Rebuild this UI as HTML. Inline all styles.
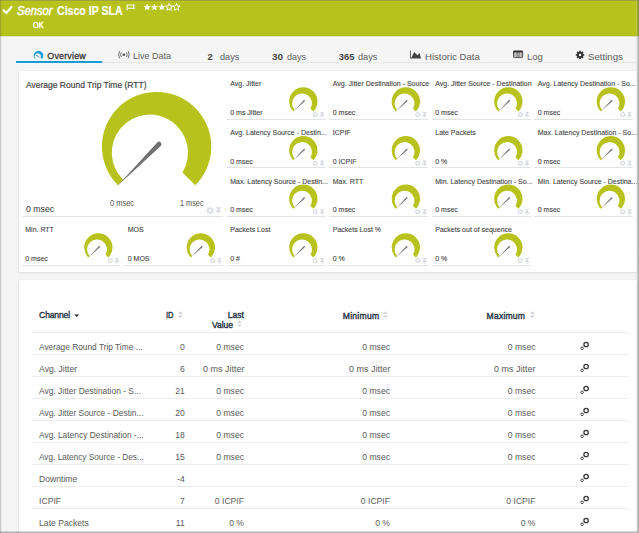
<!DOCTYPE html>
<html><head><meta charset="utf-8"><style>
html,body{margin:0;padding:0;}
body{width:639px;height:533px;overflow:hidden;position:relative;background:#f5f5f5;font-family:"Liberation Sans",sans-serif;}
.t{position:absolute;white-space:nowrap;line-height:normal;}
svg{overflow:visible;}
</style></head><body>
<div style="position:absolute;left:0px;top:0px;width:639px;height:35px;background:#b8c21d;"></div>
<div style="position:absolute;left:0px;top:35px;width:639px;height:1px;background:#b4be14;"></div>
<div style="position:absolute;left:0px;top:36px;width:639px;height:1px;background:#dfe2b6;"></div>
<div style="position:absolute;left:0px;top:37px;width:639px;height:1px;background:#f8f8f9;"></div>
<div style="position:absolute;left:0px;top:0px;width:639px;height:1px;background:#9ea23c;"></div>
<svg style="position:absolute;left:0px;top:0px;" width="20" height="20" viewBox="0 0 20 20"><path d="M3.0 9.7L6.4 13.0L12.2 6.2" fill="none" stroke="#fff" stroke-width="2.1"/></svg>
<div class="t" style="left:17.30px;top:4.26px;font-size:12.2px;color:#fff;font-style:italic;transform:scaleX(0.9216);transform-origin:0 0;-webkit-text-stroke:0.45px #fff;">Sensor</div>
<div class="t" style="left:57.40px;top:4.44px;font-size:12.0px;color:#fff;font-weight:bold;transform:scaleX(0.8809);transform-origin:0 0;-webkit-text-stroke:0.2px #fff;">Cisco IP SLA</div>
<div class="t" style="left:32.50px;top:19.72px;font-size:8.6px;color:#fff;transform:scaleX(0.8449);transform-origin:0 0;-webkit-text-stroke:0.4px #fff;">OK</div>
<svg style="position:absolute;left:0px;top:0px;" width="639" height="533" viewBox="0 0 639 533"><path d="M127.2 4.4V10.6" stroke="#fff" stroke-width="1.1"/><path d="M127.7 4.9H134.3L133.2 6.6L134.3 8.3H127.7" fill="none" stroke="#fff" stroke-width="1.05"/></svg>
<svg style="position:absolute;left:140px;top:0px;" width="44" height="14" viewBox="0 0 44 14"><polygon points="7.10,3.55 8.09,5.93 10.67,6.14 8.70,7.82 9.30,10.33 7.10,8.99 4.90,10.33 5.50,7.82 3.53,6.14 6.11,5.93" fill="#fff"/><polygon points="14.45,3.55 15.44,5.93 18.02,6.14 16.05,7.82 16.65,10.33 14.45,8.99 12.25,10.33 12.85,7.82 10.88,6.14 13.46,5.93" fill="#fff"/><polygon points="21.80,3.55 22.79,5.93 25.37,6.14 23.40,7.82 24.00,10.33 21.80,8.99 19.60,10.33 20.20,7.82 18.23,6.14 20.81,5.93" fill="#fff"/><polygon points="29.15,3.55 30.14,5.93 32.72,6.14 30.75,7.82 31.35,10.33 29.15,8.99 26.95,10.33 27.55,7.82 25.58,6.14 28.16,5.93" fill="none" stroke="#fff" stroke-width="1.0"/><polygon points="36.50,3.55 37.49,5.93 40.07,6.14 38.10,7.82 38.70,10.33 36.50,8.99 34.30,10.33 34.90,7.82 32.93,6.14 35.51,5.93" fill="none" stroke="#fff" stroke-width="1.0"/></svg>
<div style="position:absolute;left:0px;top:0px;width:1px;height:533px;background:rgba(70,70,70,.25);z-index:5;"></div>
<div style="position:absolute;left:1px;top:0px;width:1px;height:533px;background:rgba(70,70,70,.06);z-index:5;"></div>
<div style="position:absolute;left:636px;top:0px;width:3px;height:533px;background:linear-gradient(to right,rgba(255,255,255,.35),rgba(90,90,90,.2) 40%,rgba(80,80,80,.48));z-index:5;"></div>
<div style="position:absolute;left:16px;top:62px;width:621px;height:1px;background:#e8e8e8;"></div>
<div style="position:absolute;left:15px;top:60px;width:88px;height:1px;background:#fbfbfb;"></div>
<div style="position:absolute;left:15px;top:63px;width:88px;height:1px;background:#fbfbfb;"></div>
<div style="position:absolute;left:16px;top:61px;width:86px;height:2px;background:#1a9bd7;"></div>
<svg style="position:absolute;left:0px;top:0px;" width="639" height="533" viewBox="0 0 639 533"><path d="M35.14 59.06A4.75 4.75 0 1 1 41.86 59.06L40.52 57.72A3.05 3.05 0 1 0 35.59 58.61Z" fill="#1a9bd7"/><path d="M36.1 54.9L39.1 57.4" stroke="#4aaee0" stroke-width="1.1"/></svg>
<div class="t" style="left:47.30px;top:51.35px;font-size:8.9px;color:#3a3a3a;letter-spacing:0.198px;-webkit-text-stroke:0.3px #3a3a3a;">Overview</div>
<svg style="position:absolute;left:0px;top:0px;" width="639" height="533" viewBox="0 0 639 533"><circle cx="123.9" cy="54.75" r="1.35" fill="#555"/><path d="M121.30 52.45Q120.00 54.75 121.30 57.05M126.50 52.45Q127.80 54.75 126.50 57.05M119.60 51.15Q117.60 54.75 119.60 58.35M128.20 51.15Q130.20 54.75 128.20 58.35" fill="none" stroke="#666" stroke-width="0.95"/></svg>
<div class="t" style="left:133.30px;top:51.17px;font-size:9.2px;color:#606060;transform:scaleX(0.9776);transform-origin:0 0;">Live Data</div>
<div class="t" style="left:207.50px;top:50.99px;font-size:9.4px;color:#444;font-weight:bold;">2</div>
<div class="t" style="left:219.50px;top:50.99px;font-size:9.4px;color:#606060;transform:scaleX(0.9722);transform-origin:0 0;">days</div>
<div class="t" style="left:272.00px;top:50.99px;font-size:9.4px;color:#444;font-weight:bold;transform:scaleX(1.0523);transform-origin:0 0;">30</div>
<div class="t" style="left:287.00px;top:50.99px;font-size:9.4px;color:#606060;transform:scaleX(0.9570);transform-origin:0 0;">days</div>
<div class="t" style="left:338.80px;top:50.99px;font-size:9.4px;color:#444;font-weight:bold;">365</div>
<div class="t" style="left:357.50px;top:50.99px;font-size:9.4px;color:#606060;transform:scaleX(0.9822);transform-origin:0 0;">days</div>
<svg style="position:absolute;left:0px;top:0px;" width="639" height="533" viewBox="0 0 639 533"><path d="M410 50.8H411V58.7H410Z" fill="#666"/><path d="M410.5 57.9H421.2V58.8H410.5Z" fill="#8a8a8a"/><path d="M411.3 57.9L414.2 51.9L417.4 55.2L419.6 52.9L420.8 57.9Z" fill="#444"/></svg>
<div class="t" style="left:425.40px;top:50.99px;font-size:9.4px;color:#606060;transform:scaleX(1.0220);transform-origin:0 0;">Historic Data</div>
<svg style="position:absolute;left:0px;top:0px;" width="639" height="533" viewBox="0 0 639 533"><rect x="513.5" y="51" width="9.2" height="6.6" rx="0.9" fill="#999" stroke="#444" stroke-width="0.9"/><rect x="513.3" y="50.8" width="9.6" height="1.7" fill="#333"/><path d="M515.3 52.5V57.2M520.9 52.5V57.2" stroke="#ddd" stroke-width="0.9"/></svg>
<div class="t" style="left:527.00px;top:50.99px;font-size:9.4px;color:#606060;transform:scaleX(1.0141);transform-origin:0 0;">Log</div>
<svg style="position:absolute;left:0px;top:0px;" width="639" height="533" viewBox="0 0 639 533"><g><rect x="579.2" y="50.7" width="1.7" height="2" fill="#333" transform="rotate(0 580.05 54.9)"/><rect x="579.2" y="50.7" width="1.7" height="2" fill="#333" transform="rotate(45 580.05 54.9)"/><rect x="579.2" y="50.7" width="1.7" height="2" fill="#333" transform="rotate(90 580.05 54.9)"/><rect x="579.2" y="50.7" width="1.7" height="2" fill="#333" transform="rotate(135 580.05 54.9)"/><rect x="579.2" y="50.7" width="1.7" height="2" fill="#333" transform="rotate(180 580.05 54.9)"/><rect x="579.2" y="50.7" width="1.7" height="2" fill="#333" transform="rotate(225 580.05 54.9)"/><rect x="579.2" y="50.7" width="1.7" height="2" fill="#333" transform="rotate(270 580.05 54.9)"/><rect x="579.2" y="50.7" width="1.7" height="2" fill="#333" transform="rotate(315 580.05 54.9)"/></g><circle cx="580.05" cy="54.9" r="3.05" fill="#333"/><circle cx="580.05" cy="54.9" r="1.2" fill="#f5f5f5"/></svg>
<div class="t" style="left:588.00px;top:50.99px;font-size:9.4px;color:#606060;transform:scaleX(1.0276);transform-origin:0 0;">Settings</div>
<div style="position:absolute;left:19px;top:70.5px;width:618px;height:201.5px;background:#fff;box-shadow:0 0.5px 3px rgba(0,0,0,.12),0 0 1px rgba(0,0,0,.07);"></div>
<div class="t" style="left:26.00px;top:78.92px;font-size:9.7px;color:#444;transform:scaleX(0.8768);transform-origin:0 0;-webkit-text-stroke:0.2px #444;">Average Round Trip Time (RTT)</div>
<svg style="position:absolute;left:0px;top:0px;pointer-events:none;z-index:2;" width="639" height="533" viewBox="0 0 639 533"><path d="M117.92 185.28A54.7 54.7 0 1 1 195.28 185.28L182.47 172.47A38.1 38.1 0 1 0 123.26 179.94Z" fill="#b8c21d"/><path d="M117.30 186.00L160.77 145.97A2.5 2.5 0 0 0 157.23 142.43Z" fill="#707070"/></svg>
<div class="t" style="left:109.70px;top:197.72px;font-size:8.6px;color:#555;transform:scaleX(0.8659);transform-origin:0 0;">0 msec</div>
<div class="t" style="left:180.00px;top:197.72px;font-size:8.6px;color:#555;transform:scaleX(0.8514);transform-origin:0 0;">1 msec</div>
<div class="t" style="left:25.50px;top:203.78px;font-size:9.3px;color:#333;transform:scaleX(0.9408);transform-origin:0 0;">0 msec</div>
<div style="position:absolute;left:22px;top:216px;width:200.5px;height:1px;background:#e3e3e3;"></div>
<div style="position:absolute;left:226.95px;top:118.7px;width:98.7px;height:1px;background:#e3e3e3;"></div>
<div class="t" style="left:230.25px;top:79.87px;font-size:7.0px;color:#444;-webkit-text-stroke:0.1px #444;">Avg. Jitter</div>
<div class="t" style="left:230.25px;top:109.07px;font-size:7.0px;color:#444;-webkit-text-stroke:0.1px #444;">0 ms Jitter</div>
<svg style="position:absolute;left:0px;top:0px;pointer-events:none;" width="639" height="533" viewBox="0 0 639 533"><path d="M293.34 111.46A14.15 14.15 0 1 1 313.36 111.46L310.50 108.60A9.95 9.95 0 1 0 294.72 110.08Z" fill="#b8c21d"/><path d="M293.80 111.00L304.78 101.29A0.75 0.75 0 0 0 303.72 100.21Z" fill="#6f6f6f"/></svg>
<svg style="position:absolute;left:0px;top:0px;" width="639" height="533" viewBox="0 0 639 533"><circle cx="315.25" cy="114.50" r="1.85" fill="none" stroke="#d9dce2" stroke-width="1.3"/><path d="M319.95 111.90H324.15V112.78H323.10V115.07H324.15V116.30H319.95V115.07H321.00V112.78H319.95Z" fill="#d9dce2"/><path d="M322.05 116.10V118.10" stroke="#d9dce2" stroke-width="0.8"/></svg>
<div style="position:absolute;left:329.45px;top:118.7px;width:98.7px;height:1px;background:#e3e3e3;"></div>
<div class="t" style="left:332.75px;top:79.87px;font-size:7.0px;color:#444;-webkit-text-stroke:0.1px #444;">Avg. Jitter Destination - Source</div>
<div class="t" style="left:332.75px;top:109.07px;font-size:7.0px;color:#444;-webkit-text-stroke:0.1px #444;">0 msec</div>
<svg style="position:absolute;left:0px;top:0px;pointer-events:none;" width="639" height="533" viewBox="0 0 639 533"><path d="M395.84 111.46A14.15 14.15 0 1 1 415.86 111.46L413.00 108.60A9.95 9.95 0 1 0 397.22 110.08Z" fill="#b8c21d"/><path d="M396.30 111.00L407.28 101.29A0.75 0.75 0 0 0 406.22 100.21Z" fill="#6f6f6f"/></svg>
<svg style="position:absolute;left:0px;top:0px;" width="639" height="533" viewBox="0 0 639 533"><circle cx="417.75" cy="114.50" r="1.85" fill="none" stroke="#d9dce2" stroke-width="1.3"/><path d="M422.45 111.90H426.65V112.78H425.60V115.07H426.65V116.30H422.45V115.07H423.50V112.78H422.45Z" fill="#d9dce2"/><path d="M424.55 116.10V118.10" stroke="#d9dce2" stroke-width="0.8"/></svg>
<div style="position:absolute;left:431.95px;top:118.7px;width:98.7px;height:1px;background:#e3e3e3;"></div>
<div class="t" style="left:435.25px;top:79.87px;font-size:7.0px;color:#444;-webkit-text-stroke:0.1px #444;">Avg. Jitter Source - Destination</div>
<div class="t" style="left:435.25px;top:109.07px;font-size:7.0px;color:#444;-webkit-text-stroke:0.1px #444;">0 msec</div>
<svg style="position:absolute;left:0px;top:0px;pointer-events:none;" width="639" height="533" viewBox="0 0 639 533"><path d="M498.34 111.46A14.15 14.15 0 1 1 518.36 111.46L515.50 108.60A9.95 9.95 0 1 0 499.72 110.08Z" fill="#b8c21d"/><path d="M498.80 111.00L509.78 101.29A0.75 0.75 0 0 0 508.72 100.21Z" fill="#6f6f6f"/></svg>
<svg style="position:absolute;left:0px;top:0px;" width="639" height="533" viewBox="0 0 639 533"><circle cx="520.25" cy="114.50" r="1.85" fill="none" stroke="#d9dce2" stroke-width="1.3"/><path d="M524.95 111.90H529.15V112.78H528.10V115.07H529.15V116.30H524.95V115.07H526.00V112.78H524.95Z" fill="#d9dce2"/><path d="M527.05 116.10V118.10" stroke="#d9dce2" stroke-width="0.8"/></svg>
<div style="position:absolute;left:534.45px;top:118.7px;width:98.7px;height:1px;background:#e3e3e3;"></div>
<div class="t" style="left:537.75px;top:79.87px;font-size:7.0px;color:#444;-webkit-text-stroke:0.1px #444;">Avg. Latency Destination - So...</div>
<div class="t" style="left:537.75px;top:109.07px;font-size:7.0px;color:#444;-webkit-text-stroke:0.1px #444;">0 msec</div>
<svg style="position:absolute;left:0px;top:0px;pointer-events:none;" width="639" height="533" viewBox="0 0 639 533"><path d="M600.84 111.46A14.15 14.15 0 1 1 620.86 111.46L618.00 108.60A9.95 9.95 0 1 0 602.22 110.08Z" fill="#b8c21d"/><path d="M601.30 111.00L612.28 101.29A0.75 0.75 0 0 0 611.22 100.21Z" fill="#6f6f6f"/></svg>
<svg style="position:absolute;left:0px;top:0px;" width="639" height="533" viewBox="0 0 639 533"><circle cx="622.75" cy="114.50" r="1.85" fill="none" stroke="#d9dce2" stroke-width="1.3"/><path d="M627.45 111.90H631.65V112.78H630.60V115.07H631.65V116.30H627.45V115.07H628.50V112.78H627.45Z" fill="#d9dce2"/><path d="M629.55 116.10V118.10" stroke="#d9dce2" stroke-width="0.8"/></svg>
<div style="position:absolute;left:226.95px;top:167.4px;width:98.7px;height:1px;background:#e3e3e3;"></div>
<div class="t" style="left:230.25px;top:129.47px;font-size:7.0px;color:#444;-webkit-text-stroke:0.1px #444;">Avg. Latency Source - Destin...</div>
<div class="t" style="left:230.25px;top:157.76px;font-size:7.0px;color:#444;-webkit-text-stroke:0.1px #444;">0 msec</div>
<svg style="position:absolute;left:0px;top:0px;pointer-events:none;" width="639" height="533" viewBox="0 0 639 533"><path d="M293.34 160.16A14.15 14.15 0 1 1 313.36 160.16L310.50 157.30A9.95 9.95 0 1 0 294.72 158.78Z" fill="#b8c21d"/><path d="M293.80 159.70L304.78 149.99A0.75 0.75 0 0 0 303.72 148.91Z" fill="#6f6f6f"/></svg>
<svg style="position:absolute;left:0px;top:0px;" width="639" height="533" viewBox="0 0 639 533"><circle cx="315.25" cy="163.20" r="1.85" fill="none" stroke="#d9dce2" stroke-width="1.3"/><path d="M319.95 160.60H324.15V161.48H323.10V163.77H324.15V165.00H319.95V163.77H321.00V161.48H319.95Z" fill="#d9dce2"/><path d="M322.05 164.80V166.80" stroke="#d9dce2" stroke-width="0.8"/></svg>
<div style="position:absolute;left:329.45px;top:167.4px;width:98.7px;height:1px;background:#e3e3e3;"></div>
<div class="t" style="left:332.75px;top:129.47px;font-size:7.0px;color:#444;-webkit-text-stroke:0.1px #444;">ICPIF</div>
<div class="t" style="left:332.75px;top:157.76px;font-size:7.0px;color:#444;-webkit-text-stroke:0.1px #444;">0 ICPIF</div>
<svg style="position:absolute;left:0px;top:0px;pointer-events:none;" width="639" height="533" viewBox="0 0 639 533"><path d="M395.84 160.16A14.15 14.15 0 1 1 415.86 160.16L413.00 157.30A9.95 9.95 0 1 0 397.22 158.78Z" fill="#b8c21d"/><path d="M396.30 159.70L407.28 149.99A0.75 0.75 0 0 0 406.22 148.91Z" fill="#6f6f6f"/></svg>
<svg style="position:absolute;left:0px;top:0px;" width="639" height="533" viewBox="0 0 639 533"><circle cx="417.75" cy="163.20" r="1.85" fill="none" stroke="#d9dce2" stroke-width="1.3"/><path d="M422.45 160.60H426.65V161.48H425.60V163.77H426.65V165.00H422.45V163.77H423.50V161.48H422.45Z" fill="#d9dce2"/><path d="M424.55 164.80V166.80" stroke="#d9dce2" stroke-width="0.8"/></svg>
<div style="position:absolute;left:431.95px;top:167.4px;width:98.7px;height:1px;background:#e3e3e3;"></div>
<div class="t" style="left:435.25px;top:129.47px;font-size:7.0px;color:#444;-webkit-text-stroke:0.1px #444;">Late Packets</div>
<div class="t" style="left:435.25px;top:157.76px;font-size:7.0px;color:#444;-webkit-text-stroke:0.1px #444;">0 %</div>
<svg style="position:absolute;left:0px;top:0px;pointer-events:none;" width="639" height="533" viewBox="0 0 639 533"><path d="M498.34 160.16A14.15 14.15 0 1 1 518.36 160.16L515.50 157.30A9.95 9.95 0 1 0 499.72 158.78Z" fill="#b8c21d"/><path d="M498.80 159.70L509.78 149.99A0.75 0.75 0 0 0 508.72 148.91Z" fill="#6f6f6f"/></svg>
<svg style="position:absolute;left:0px;top:0px;" width="639" height="533" viewBox="0 0 639 533"><circle cx="520.25" cy="163.20" r="1.85" fill="none" stroke="#d9dce2" stroke-width="1.3"/><path d="M524.95 160.60H529.15V161.48H528.10V163.77H529.15V165.00H524.95V163.77H526.00V161.48H524.95Z" fill="#d9dce2"/><path d="M527.05 164.80V166.80" stroke="#d9dce2" stroke-width="0.8"/></svg>
<div style="position:absolute;left:534.45px;top:167.4px;width:98.7px;height:1px;background:#e3e3e3;"></div>
<div class="t" style="left:537.75px;top:129.47px;font-size:7.0px;color:#444;-webkit-text-stroke:0.1px #444;">Max. Latency Destination - So...</div>
<div class="t" style="left:537.75px;top:157.76px;font-size:7.0px;color:#444;-webkit-text-stroke:0.1px #444;">0 msec</div>
<svg style="position:absolute;left:0px;top:0px;pointer-events:none;" width="639" height="533" viewBox="0 0 639 533"><path d="M600.84 160.16A14.15 14.15 0 1 1 620.86 160.16L618.00 157.30A9.95 9.95 0 1 0 602.22 158.78Z" fill="#b8c21d"/><path d="M601.30 159.70L612.28 149.99A0.75 0.75 0 0 0 611.22 148.91Z" fill="#6f6f6f"/></svg>
<svg style="position:absolute;left:0px;top:0px;" width="639" height="533" viewBox="0 0 639 533"><circle cx="622.75" cy="163.20" r="1.85" fill="none" stroke="#d9dce2" stroke-width="1.3"/><path d="M627.45 160.60H631.65V161.48H630.60V163.77H631.65V165.00H627.45V163.77H628.50V161.48H627.45Z" fill="#d9dce2"/><path d="M629.55 164.80V166.80" stroke="#d9dce2" stroke-width="0.8"/></svg>
<div style="position:absolute;left:226.95px;top:216.0px;width:98.7px;height:1px;background:#e3e3e3;"></div>
<div class="t" style="left:230.25px;top:177.66px;font-size:7.0px;color:#444;-webkit-text-stroke:0.1px #444;">Max. Latency Source - Destin...</div>
<div class="t" style="left:230.25px;top:206.36px;font-size:7.0px;color:#444;-webkit-text-stroke:0.1px #444;">0 msec</div>
<svg style="position:absolute;left:0px;top:0px;pointer-events:none;" width="639" height="533" viewBox="0 0 639 533"><path d="M293.34 208.76A14.15 14.15 0 1 1 313.36 208.76L310.50 205.90A9.95 9.95 0 1 0 294.72 207.38Z" fill="#b8c21d"/><path d="M293.80 208.30L304.78 198.59A0.75 0.75 0 0 0 303.72 197.51Z" fill="#6f6f6f"/></svg>
<svg style="position:absolute;left:0px;top:0px;" width="639" height="533" viewBox="0 0 639 533"><circle cx="315.25" cy="211.80" r="1.85" fill="none" stroke="#d9dce2" stroke-width="1.3"/><path d="M319.95 209.20H324.15V210.08H323.10V212.37H324.15V213.60H319.95V212.37H321.00V210.08H319.95Z" fill="#d9dce2"/><path d="M322.05 213.40V215.40" stroke="#d9dce2" stroke-width="0.8"/></svg>
<div style="position:absolute;left:329.45px;top:216.0px;width:98.7px;height:1px;background:#e3e3e3;"></div>
<div class="t" style="left:332.75px;top:177.66px;font-size:7.0px;color:#444;-webkit-text-stroke:0.1px #444;">Max. RTT</div>
<div class="t" style="left:332.75px;top:206.36px;font-size:7.0px;color:#444;-webkit-text-stroke:0.1px #444;">0 msec</div>
<svg style="position:absolute;left:0px;top:0px;pointer-events:none;" width="639" height="533" viewBox="0 0 639 533"><path d="M395.84 208.76A14.15 14.15 0 1 1 415.86 208.76L413.00 205.90A9.95 9.95 0 1 0 397.22 207.38Z" fill="#b8c21d"/><path d="M396.30 208.30L407.28 198.59A0.75 0.75 0 0 0 406.22 197.51Z" fill="#6f6f6f"/></svg>
<svg style="position:absolute;left:0px;top:0px;" width="639" height="533" viewBox="0 0 639 533"><circle cx="417.75" cy="211.80" r="1.85" fill="none" stroke="#d9dce2" stroke-width="1.3"/><path d="M422.45 209.20H426.65V210.08H425.60V212.37H426.65V213.60H422.45V212.37H423.50V210.08H422.45Z" fill="#d9dce2"/><path d="M424.55 213.40V215.40" stroke="#d9dce2" stroke-width="0.8"/></svg>
<div style="position:absolute;left:431.95px;top:216.0px;width:98.7px;height:1px;background:#e3e3e3;"></div>
<div class="t" style="left:435.25px;top:177.66px;font-size:7.0px;color:#444;-webkit-text-stroke:0.1px #444;">Min. Latency Destination - So...</div>
<div class="t" style="left:435.25px;top:206.36px;font-size:7.0px;color:#444;-webkit-text-stroke:0.1px #444;">0 msec</div>
<svg style="position:absolute;left:0px;top:0px;pointer-events:none;" width="639" height="533" viewBox="0 0 639 533"><path d="M498.34 208.76A14.15 14.15 0 1 1 518.36 208.76L515.50 205.90A9.95 9.95 0 1 0 499.72 207.38Z" fill="#b8c21d"/><path d="M498.80 208.30L509.78 198.59A0.75 0.75 0 0 0 508.72 197.51Z" fill="#6f6f6f"/></svg>
<svg style="position:absolute;left:0px;top:0px;" width="639" height="533" viewBox="0 0 639 533"><circle cx="520.25" cy="211.80" r="1.85" fill="none" stroke="#d9dce2" stroke-width="1.3"/><path d="M524.95 209.20H529.15V210.08H528.10V212.37H529.15V213.60H524.95V212.37H526.00V210.08H524.95Z" fill="#d9dce2"/><path d="M527.05 213.40V215.40" stroke="#d9dce2" stroke-width="0.8"/></svg>
<div style="position:absolute;left:534.45px;top:216.0px;width:98.7px;height:1px;background:#e3e3e3;"></div>
<div class="t" style="left:537.75px;top:177.66px;font-size:7.0px;color:#444;-webkit-text-stroke:0.1px #444;">Min. Latency Source - Destina...</div>
<div class="t" style="left:537.75px;top:206.36px;font-size:7.0px;color:#444;-webkit-text-stroke:0.1px #444;">0 msec</div>
<svg style="position:absolute;left:0px;top:0px;pointer-events:none;" width="639" height="533" viewBox="0 0 639 533"><path d="M600.84 208.76A14.15 14.15 0 1 1 620.86 208.76L618.00 205.90A9.95 9.95 0 1 0 602.22 207.38Z" fill="#b8c21d"/><path d="M601.30 208.30L612.28 198.59A0.75 0.75 0 0 0 611.22 197.51Z" fill="#6f6f6f"/></svg>
<svg style="position:absolute;left:0px;top:0px;" width="639" height="533" viewBox="0 0 639 533"><circle cx="622.75" cy="211.80" r="1.85" fill="none" stroke="#d9dce2" stroke-width="1.3"/><path d="M627.45 209.20H631.65V210.08H630.60V212.37H631.65V213.60H627.45V212.37H628.50V210.08H627.45Z" fill="#d9dce2"/><path d="M629.55 213.40V215.40" stroke="#d9dce2" stroke-width="0.8"/></svg>
<div style="position:absolute;left:21.95px;top:264.7px;width:98.7px;height:1px;background:#e3e3e3;"></div>
<div class="t" style="left:25.25px;top:225.97px;font-size:7.0px;color:#444;-webkit-text-stroke:0.1px #444;">Min. RTT</div>
<div class="t" style="left:25.25px;top:255.06px;font-size:7.0px;color:#444;-webkit-text-stroke:0.1px #444;">0 msec</div>
<svg style="position:absolute;left:0px;top:0px;pointer-events:none;" width="639" height="533" viewBox="0 0 639 533"><path d="M88.34 257.46A14.15 14.15 0 1 1 108.36 257.46L105.50 254.60A9.95 9.95 0 1 0 89.72 256.08Z" fill="#b8c21d"/><path d="M88.80 257.00L99.78 247.29A0.75 0.75 0 0 0 98.72 246.21Z" fill="#6f6f6f"/></svg>
<svg style="position:absolute;left:0px;top:0px;" width="639" height="533" viewBox="0 0 639 533"><circle cx="110.25" cy="260.50" r="1.85" fill="none" stroke="#d9dce2" stroke-width="1.3"/><path d="M114.95 257.90H119.15V258.78H118.10V261.07H119.15V262.30H114.95V261.07H116.00V258.78H114.95Z" fill="#d9dce2"/><path d="M117.05 262.10V264.10" stroke="#d9dce2" stroke-width="0.8"/></svg>
<div style="position:absolute;left:124.45px;top:264.7px;width:98.7px;height:1px;background:#e3e3e3;"></div>
<div class="t" style="left:127.75px;top:225.97px;font-size:7.0px;color:#444;-webkit-text-stroke:0.1px #444;">MOS</div>
<div class="t" style="left:127.75px;top:255.06px;font-size:7.0px;color:#444;-webkit-text-stroke:0.1px #444;">0 MOS</div>
<svg style="position:absolute;left:0px;top:0px;pointer-events:none;" width="639" height="533" viewBox="0 0 639 533"><path d="M190.84 257.46A14.15 14.15 0 1 1 210.86 257.46L208.00 254.60A9.95 9.95 0 1 0 192.22 256.08Z" fill="#b8c21d"/><path d="M191.30 257.00L202.28 247.29A0.75 0.75 0 0 0 201.22 246.21Z" fill="#6f6f6f"/></svg>
<svg style="position:absolute;left:0px;top:0px;" width="639" height="533" viewBox="0 0 639 533"><circle cx="212.75" cy="260.50" r="1.85" fill="none" stroke="#d9dce2" stroke-width="1.3"/><path d="M217.45 257.90H221.65V258.78H220.60V261.07H221.65V262.30H217.45V261.07H218.50V258.78H217.45Z" fill="#d9dce2"/><path d="M219.55 262.10V264.10" stroke="#d9dce2" stroke-width="0.8"/></svg>
<div style="position:absolute;left:226.95px;top:264.7px;width:98.7px;height:1px;background:#e3e3e3;"></div>
<div class="t" style="left:230.25px;top:225.97px;font-size:7.0px;color:#444;-webkit-text-stroke:0.1px #444;">Packets Lost</div>
<div class="t" style="left:230.25px;top:255.06px;font-size:7.0px;color:#444;-webkit-text-stroke:0.1px #444;">0 #</div>
<svg style="position:absolute;left:0px;top:0px;pointer-events:none;" width="639" height="533" viewBox="0 0 639 533"><path d="M293.34 257.46A14.15 14.15 0 1 1 313.36 257.46L310.50 254.60A9.95 9.95 0 1 0 294.72 256.08Z" fill="#b8c21d"/><path d="M293.80 257.00L304.78 247.29A0.75 0.75 0 0 0 303.72 246.21Z" fill="#6f6f6f"/></svg>
<svg style="position:absolute;left:0px;top:0px;" width="639" height="533" viewBox="0 0 639 533"><circle cx="315.25" cy="260.50" r="1.85" fill="none" stroke="#d9dce2" stroke-width="1.3"/><path d="M319.95 257.90H324.15V258.78H323.10V261.07H324.15V262.30H319.95V261.07H321.00V258.78H319.95Z" fill="#d9dce2"/><path d="M322.05 262.10V264.10" stroke="#d9dce2" stroke-width="0.8"/></svg>
<div style="position:absolute;left:329.45px;top:264.7px;width:98.7px;height:1px;background:#e3e3e3;"></div>
<div class="t" style="left:332.75px;top:225.97px;font-size:7.0px;color:#444;-webkit-text-stroke:0.1px #444;">Packets Lost %</div>
<div class="t" style="left:332.75px;top:255.06px;font-size:7.0px;color:#444;-webkit-text-stroke:0.1px #444;">0 %</div>
<svg style="position:absolute;left:0px;top:0px;pointer-events:none;" width="639" height="533" viewBox="0 0 639 533"><path d="M395.84 257.46A14.15 14.15 0 1 1 415.86 257.46L413.00 254.60A9.95 9.95 0 1 0 397.22 256.08Z" fill="#b8c21d"/><path d="M396.30 257.00L407.28 247.29A0.75 0.75 0 0 0 406.22 246.21Z" fill="#6f6f6f"/></svg>
<svg style="position:absolute;left:0px;top:0px;" width="639" height="533" viewBox="0 0 639 533"><circle cx="417.75" cy="260.50" r="1.85" fill="none" stroke="#d9dce2" stroke-width="1.3"/><path d="M422.45 257.90H426.65V258.78H425.60V261.07H426.65V262.30H422.45V261.07H423.50V258.78H422.45Z" fill="#d9dce2"/><path d="M424.55 262.10V264.10" stroke="#d9dce2" stroke-width="0.8"/></svg>
<div style="position:absolute;left:431.95px;top:264.7px;width:98.7px;height:1px;background:#e3e3e3;"></div>
<div class="t" style="left:435.25px;top:225.97px;font-size:7.0px;color:#444;-webkit-text-stroke:0.1px #444;">Packets out of sequence</div>
<div class="t" style="left:435.25px;top:255.06px;font-size:7.0px;color:#444;-webkit-text-stroke:0.1px #444;">0 %</div>
<svg style="position:absolute;left:0px;top:0px;pointer-events:none;" width="639" height="533" viewBox="0 0 639 533"><path d="M498.34 257.46A14.15 14.15 0 1 1 518.36 257.46L515.50 254.60A9.95 9.95 0 1 0 499.72 256.08Z" fill="#b8c21d"/><path d="M498.80 257.00L509.78 247.29A0.75 0.75 0 0 0 508.72 246.21Z" fill="#6f6f6f"/></svg>
<svg style="position:absolute;left:0px;top:0px;" width="639" height="533" viewBox="0 0 639 533"><circle cx="520.25" cy="260.50" r="1.85" fill="none" stroke="#d9dce2" stroke-width="1.3"/><path d="M524.95 257.90H529.15V258.78H528.10V261.07H529.15V262.30H524.95V261.07H526.00V258.78H524.95Z" fill="#d9dce2"/><path d="M527.05 262.10V264.10" stroke="#d9dce2" stroke-width="0.8"/></svg>
<svg style="position:absolute;left:0px;top:0px;" width="639" height="533" viewBox="0 0 639 533"><rect x="209.55" y="206.80" width="1.1" height="1.4" fill="#d9dce2" transform="rotate(0 210.10 210.50)"/><rect x="209.55" y="206.80" width="1.1" height="1.4" fill="#d9dce2" transform="rotate(45 210.10 210.50)"/><rect x="209.55" y="206.80" width="1.1" height="1.4" fill="#d9dce2" transform="rotate(90 210.10 210.50)"/><rect x="209.55" y="206.80" width="1.1" height="1.4" fill="#d9dce2" transform="rotate(135 210.10 210.50)"/><rect x="209.55" y="206.80" width="1.1" height="1.4" fill="#d9dce2" transform="rotate(180 210.10 210.50)"/><rect x="209.55" y="206.80" width="1.1" height="1.4" fill="#d9dce2" transform="rotate(225 210.10 210.50)"/><rect x="209.55" y="206.80" width="1.1" height="1.4" fill="#d9dce2" transform="rotate(270 210.10 210.50)"/><rect x="209.55" y="206.80" width="1.1" height="1.4" fill="#d9dce2" transform="rotate(315 210.10 210.50)"/><circle cx="210.10" cy="210.50" r="2.2" fill="none" stroke="#d9dce2" stroke-width="1.5"/><path d="M216.10 207.30H221.00V208.24H219.78V210.68H221.00V212.00H216.10V210.68H217.32V208.24H216.10Z" fill="#d9dce2"/><path d="M218.55 211.80V213.80" stroke="#d9dce2" stroke-width="0.8"/></svg>
<div style="position:absolute;left:19px;top:279.6px;width:618px;height:260px;background:#fff;box-shadow:0 0.5px 3px rgba(0,0,0,.12),0 0 1px rgba(0,0,0,.07);"></div>
<div class="t" style="left:39.10px;top:310.42px;font-size:8.6px;color:#233142;letter-spacing:-0.172px;-webkit-text-stroke:0.35px #233142;">Channel</div>
<svg style="position:absolute;left:0px;top:0px;" width="639" height="533" viewBox="0 0 639 533"><path d="M74.3 314.4H79.1L76.7 317.0Z" fill="#222"/></svg>
<div class="t" style="left:166.20px;top:310.42px;font-size:8.6px;color:#233142;transform:scaleX(0.8837);transform-origin:0 0;-webkit-text-stroke:0.35px #233142;">ID</div>
<svg style="position:absolute;left:177.2px;top:310.6px;" width="7" height="8" viewBox="0 0 7 8"><path d="M0.9 3.1L3.4 0.3L5.9 3.1ZM0.9 4.5L3.4 7.3L5.9 4.5Z" fill="#d3d6dc"/></svg>
<div class="t" style="left:227.80px;top:310.02px;font-size:8.6px;color:#233142;letter-spacing:-0.051px;-webkit-text-stroke:0.35px #233142;">Last</div>
<div class="t" style="left:212.10px;top:320.02px;font-size:8.6px;color:#233142;letter-spacing:-0.113px;-webkit-text-stroke:0.35px #233142;">Value</div>
<svg style="position:absolute;left:236.2px;top:320.2px;" width="7" height="8" viewBox="0 0 7 8"><path d="M0.9 3.1L3.4 0.3L5.9 3.1ZM0.9 4.5L3.4 7.3L5.9 4.5Z" fill="#d3d6dc"/></svg>
<div class="t" style="left:342.80px;top:310.62px;font-size:8.6px;color:#233142;letter-spacing:0.236px;-webkit-text-stroke:0.35px #233142;">Minimum</div>
<svg style="position:absolute;left:381.8px;top:310.6px;" width="7" height="8" viewBox="0 0 7 8"><path d="M0.9 3.1L3.4 0.3L5.9 3.1ZM0.9 4.5L3.4 7.3L5.9 4.5Z" fill="#d3d6dc"/></svg>
<div class="t" style="left:486.60px;top:310.62px;font-size:8.6px;color:#233142;letter-spacing:0.188px;-webkit-text-stroke:0.35px #233142;">Maximum</div>
<svg style="position:absolute;left:528.6px;top:310.6px;" width="7" height="8" viewBox="0 0 7 8"><path d="M0.9 3.1L3.4 0.3L5.9 3.1ZM0.9 4.5L3.4 7.3L5.9 4.5Z" fill="#d3d6dc"/></svg>
<div style="position:absolute;left:32px;top:332px;width:597px;height:1px;background:#ececec;"></div>
<div class="t" style="left:39.10px;top:342.42px;font-size:8.6px;color:#5a5a5a;transform:scaleX(0.9690);transform-origin:0 0;">Average Round Trip Time ...</div>
<div class="t" style="left:179.92px;top:342.42px;font-size:8.6px;color:#5a5a5a;">0</div>
<div class="t" style="left:216.28px;top:342.42px;font-size:8.6px;color:#5a5a5a;">0 msec</div>
<div class="t" style="left:362.28px;top:342.42px;font-size:8.6px;color:#5a5a5a;">0 msec</div>
<div class="t" style="left:507.78px;top:342.42px;font-size:8.6px;color:#5a5a5a;">0 msec</div>
<svg style="position:absolute;left:579px;top:341.5px;" width="10" height="9" viewBox="0 0 10 9"><circle cx="7.1" cy="2.5" r="2.2" fill="none" stroke="#3a3a3a" stroke-width="1.3"/><circle cx="3.1" cy="6.3" r="1.3" fill="none" stroke="#3a3a3a" stroke-width="0.9"/></svg>
<div style="position:absolute;left:32px;top:354.0px;width:597px;height:1px;background:#ececec;"></div>
<div class="t" style="left:39.10px;top:364.42px;font-size:8.6px;color:#5a5a5a;">Avg. Jitter</div>
<div class="t" style="left:179.92px;top:364.42px;font-size:8.6px;color:#5a5a5a;">6</div>
<div class="t" style="left:202.60px;top:364.42px;font-size:8.6px;color:#5a5a5a;transform:scaleX(1.0438);transform-origin:0 0;">0 ms Jitter</div>
<div class="t" style="left:348.60px;top:364.42px;font-size:8.6px;color:#5a5a5a;transform:scaleX(1.0438);transform-origin:0 0;">0 ms Jitter</div>
<div class="t" style="left:494.10px;top:364.42px;font-size:8.6px;color:#5a5a5a;transform:scaleX(1.0438);transform-origin:0 0;">0 ms Jitter</div>
<svg style="position:absolute;left:579px;top:363.5px;" width="10" height="9" viewBox="0 0 10 9"><circle cx="7.1" cy="2.5" r="2.2" fill="none" stroke="#3a3a3a" stroke-width="1.3"/><circle cx="3.1" cy="6.3" r="1.3" fill="none" stroke="#3a3a3a" stroke-width="0.9"/></svg>
<div style="position:absolute;left:32px;top:376.0px;width:597px;height:1px;background:#ececec;"></div>
<div class="t" style="left:39.10px;top:386.42px;font-size:8.6px;color:#5a5a5a;transform:scaleX(0.9813);transform-origin:0 0;">Avg. Jitter Destination - S...</div>
<div class="t" style="left:175.14px;top:386.42px;font-size:8.6px;color:#5a5a5a;">21</div>
<div class="t" style="left:216.28px;top:386.42px;font-size:8.6px;color:#5a5a5a;">0 msec</div>
<div class="t" style="left:362.28px;top:386.42px;font-size:8.6px;color:#5a5a5a;">0 msec</div>
<div class="t" style="left:507.78px;top:386.42px;font-size:8.6px;color:#5a5a5a;">0 msec</div>
<svg style="position:absolute;left:579px;top:385.5px;" width="10" height="9" viewBox="0 0 10 9"><circle cx="7.1" cy="2.5" r="2.2" fill="none" stroke="#3a3a3a" stroke-width="1.3"/><circle cx="3.1" cy="6.3" r="1.3" fill="none" stroke="#3a3a3a" stroke-width="0.9"/></svg>
<div style="position:absolute;left:32px;top:398.0px;width:597px;height:1px;background:#ececec;"></div>
<div class="t" style="left:39.10px;top:408.42px;font-size:8.6px;color:#5a5a5a;transform:scaleX(0.9784);transform-origin:0 0;">Avg. Jitter Source - Destin...</div>
<div class="t" style="left:175.14px;top:408.42px;font-size:8.6px;color:#5a5a5a;">20</div>
<div class="t" style="left:216.28px;top:408.42px;font-size:8.6px;color:#5a5a5a;">0 msec</div>
<div class="t" style="left:362.28px;top:408.42px;font-size:8.6px;color:#5a5a5a;">0 msec</div>
<div class="t" style="left:507.78px;top:408.42px;font-size:8.6px;color:#5a5a5a;">0 msec</div>
<svg style="position:absolute;left:579px;top:407.5px;" width="10" height="9" viewBox="0 0 10 9"><circle cx="7.1" cy="2.5" r="2.2" fill="none" stroke="#3a3a3a" stroke-width="1.3"/><circle cx="3.1" cy="6.3" r="1.3" fill="none" stroke="#3a3a3a" stroke-width="0.9"/></svg>
<div style="position:absolute;left:32px;top:420.0px;width:597px;height:1px;background:#ececec;"></div>
<div class="t" style="left:39.10px;top:430.42px;font-size:8.6px;color:#5a5a5a;transform:scaleX(0.9758);transform-origin:0 0;">Avg. Latency Destination -...</div>
<div class="t" style="left:175.14px;top:430.42px;font-size:8.6px;color:#5a5a5a;">18</div>
<div class="t" style="left:216.28px;top:430.42px;font-size:8.6px;color:#5a5a5a;">0 msec</div>
<div class="t" style="left:362.28px;top:430.42px;font-size:8.6px;color:#5a5a5a;">0 msec</div>
<div class="t" style="left:507.78px;top:430.42px;font-size:8.6px;color:#5a5a5a;">0 msec</div>
<svg style="position:absolute;left:579px;top:429.5px;" width="10" height="9" viewBox="0 0 10 9"><circle cx="7.1" cy="2.5" r="2.2" fill="none" stroke="#3a3a3a" stroke-width="1.3"/><circle cx="3.1" cy="6.3" r="1.3" fill="none" stroke="#3a3a3a" stroke-width="0.9"/></svg>
<div style="position:absolute;left:32px;top:442.0px;width:597px;height:1px;background:#ececec;"></div>
<div class="t" style="left:39.10px;top:452.42px;font-size:8.6px;color:#5a5a5a;transform:scaleX(0.9588);transform-origin:0 0;">Avg. Latency Source - Des...</div>
<div class="t" style="left:175.14px;top:452.42px;font-size:8.6px;color:#5a5a5a;">15</div>
<div class="t" style="left:216.28px;top:452.42px;font-size:8.6px;color:#5a5a5a;">0 msec</div>
<div class="t" style="left:362.28px;top:452.42px;font-size:8.6px;color:#5a5a5a;">0 msec</div>
<div class="t" style="left:507.78px;top:452.42px;font-size:8.6px;color:#5a5a5a;">0 msec</div>
<svg style="position:absolute;left:579px;top:451.5px;" width="10" height="9" viewBox="0 0 10 9"><circle cx="7.1" cy="2.5" r="2.2" fill="none" stroke="#3a3a3a" stroke-width="1.3"/><circle cx="3.1" cy="6.3" r="1.3" fill="none" stroke="#3a3a3a" stroke-width="0.9"/></svg>
<div style="position:absolute;left:32px;top:464.0px;width:597px;height:1px;background:#ececec;"></div>
<div class="t" style="left:39.10px;top:474.42px;font-size:8.6px;color:#5a5a5a;">Downtime</div>
<div class="t" style="left:177.05px;top:474.42px;font-size:8.6px;color:#5a5a5a;">-4</div>
<svg style="position:absolute;left:579px;top:473.5px;" width="10" height="9" viewBox="0 0 10 9"><circle cx="7.1" cy="2.5" r="2.2" fill="none" stroke="#3a3a3a" stroke-width="1.3"/><circle cx="3.1" cy="6.3" r="1.3" fill="none" stroke="#3a3a3a" stroke-width="0.9"/></svg>
<div style="position:absolute;left:32px;top:486.0px;width:597px;height:1px;background:#ececec;"></div>
<div class="t" style="left:39.10px;top:496.42px;font-size:8.6px;color:#5a5a5a;">ICPIF</div>
<div class="t" style="left:179.92px;top:496.42px;font-size:8.6px;color:#5a5a5a;">7</div>
<div class="t" style="left:214.85px;top:496.42px;font-size:8.6px;color:#5a5a5a;">0 ICPIF</div>
<div class="t" style="left:360.85px;top:496.42px;font-size:8.6px;color:#5a5a5a;">0 ICPIF</div>
<div class="t" style="left:506.35px;top:496.42px;font-size:8.6px;color:#5a5a5a;">0 ICPIF</div>
<svg style="position:absolute;left:579px;top:495.5px;" width="10" height="9" viewBox="0 0 10 9"><circle cx="7.1" cy="2.5" r="2.2" fill="none" stroke="#3a3a3a" stroke-width="1.3"/><circle cx="3.1" cy="6.3" r="1.3" fill="none" stroke="#3a3a3a" stroke-width="0.9"/></svg>
<div style="position:absolute;left:32px;top:508.0px;width:597px;height:1px;background:#ececec;"></div>
<div class="t" style="left:39.10px;top:518.42px;font-size:8.6px;color:#5a5a5a;">Late Packets</div>
<div class="t" style="left:175.77px;top:518.42px;font-size:8.6px;color:#5a5a5a;">11</div>
<div class="t" style="left:229.18px;top:518.42px;font-size:8.6px;color:#5a5a5a;">0 %</div>
<div class="t" style="left:375.18px;top:518.42px;font-size:8.6px;color:#5a5a5a;">0 %</div>
<div class="t" style="left:520.68px;top:518.42px;font-size:8.6px;color:#5a5a5a;">0 %</div>
<svg style="position:absolute;left:579px;top:517.5px;" width="10" height="9" viewBox="0 0 10 9"><circle cx="7.1" cy="2.5" r="2.2" fill="none" stroke="#3a3a3a" stroke-width="1.3"/><circle cx="3.1" cy="6.3" r="1.3" fill="none" stroke="#3a3a3a" stroke-width="0.9"/></svg>
<div style="position:absolute;left:0px;top:531px;width:637px;height:2px;background:linear-gradient(to bottom,rgba(90,90,90,.18),rgba(80,80,80,.45));z-index:5;"></div>
</body></html>
